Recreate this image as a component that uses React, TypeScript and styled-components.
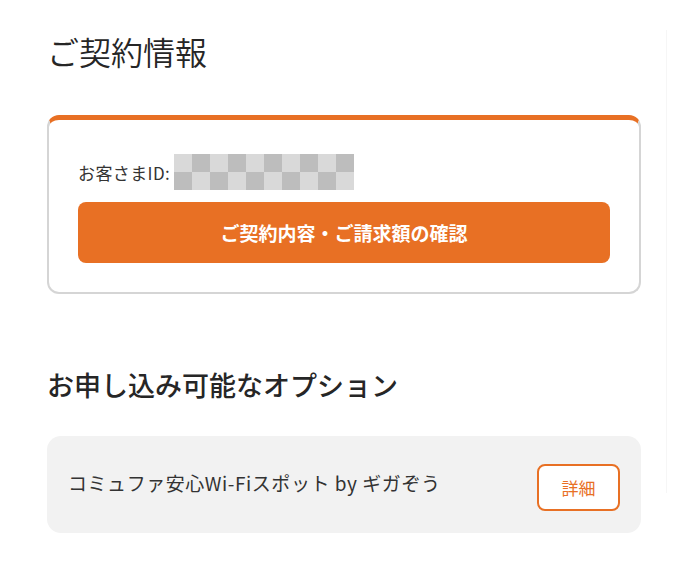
import React from 'react';
import styled, { createGlobalStyle } from 'styled-components';

const ORANGE = '#e87024';

const GlobalStyle = createGlobalStyle`
    html, body {
        margin: 0;
        padding: 0;
        background: #ffffff;
    }
    body {
        font-family: 'Noto Sans CJK JP', 'Noto Sans', sans-serif;
        color: #2b2b2b;
    }
`;

const Page = styled.div`
    display: flex;
    width: 699px;
    min-height: 569px;
`;

const Main = styled.main`
    width: 594px;
    padding: 30px 25px 0 47px;
`;

const Divider = styled.aside`
    margin-top: 30px;
    width: 32px;
    height: 463px;
    border-left: 1px solid #f6f6f6;
`;

const Title = styled.h1`
    margin: 0;
    font-size: 32px;
    line-height: 43px;
    font-weight: 350;
    color: #262626;
`;

const SubTitle = styled.h2`
    margin: 72px 0 0;
    font-size: 27px;
    line-height: 38px;
    font-weight: 500;
    color: #262626;
`;

const ContractCard = styled.section`
    margin-top: 42px;
    padding: 34px 29px 29px;
    border: 2px solid #d5d5d5;
    border-top: 5px solid ${ORANGE};
    border-radius: 12px;
    background: #fff;
`;

const IdRow = styled.div`
    display: flex;
    align-items: center;
    height: 36px;
    font-size: 17px;
    letter-spacing: 0.4px;
    color: #333;
`;

const Masked = styled.div`
    display: grid;
    grid-template-columns: repeat(10, 18px);
    grid-template-rows: repeat(2, 18px);
    margin-left: 4px;
`;

const Cell = styled.span<{ $dark: boolean }>`
    background: ${(p) => (p.$dark ? '#bdbdbd' : '#d9d9d9')};
`;

const PrimaryButton = styled.button`
    display: flex;
    align-items: center;
    justify-content: center;
    width: 100%;
    height: 61px;
    margin-top: 12px;
    border: none;
    border-radius: 8px;
    background: ${ORANGE};
    color: #fff;
    font-family: inherit;
    font-size: 19px;
    font-weight: 700;
`;

const OptionCard = styled.div`
    display: flex;
    align-items: center;
    justify-content: space-between;
    height: 97px;
    margin-top: 32px;
    padding: 0 21px;
    border-radius: 14px;
    background: #f2f2f2;
`;

const OptionName = styled.span`
    font-size: 19px;
    letter-spacing: 0.55px;
    color: #333;
    margin-top: -4px;
`;

const DetailButton = styled.button`
    width: 83px;
    height: 47px;
    margin-top: 6px;
    border: 2px solid ${ORANGE};
    border-radius: 8px;
    background: #fff;
    color: ${ORANGE};
    font-family: inherit;
    font-size: 17px;
`;

const App = (): React.ReactElement => {
    const cells = Array.from({ length: 20 }, (_, i) => {
        const row = Math.floor(i / 10);
        const col = i % 10;
        return (row + col) % 2 === 1;
    });

    return (
        <Page>
            <GlobalStyle />
            <Main>
                <Title>ご契約情報</Title>
                <ContractCard>
                    <IdRow>
                        お客さまID:
                        <Masked>
                            {cells.map((dark, i) => (
                                <Cell key={i} $dark={dark} />
                            ))}
                        </Masked>
                    </IdRow>
                    <PrimaryButton>ご契約内容・ご請求額の確認</PrimaryButton>
                </ContractCard>
                <SubTitle>お申し込み可能なオプション</SubTitle>
                <OptionCard>
                    <OptionName>コミュファ安心Wi-Fiスポット by ギガぞう</OptionName>
                    <DetailButton>詳細</DetailButton>
                </OptionCard>
            </Main>
            <Divider />
        </Page>
    );
};

export default App;
